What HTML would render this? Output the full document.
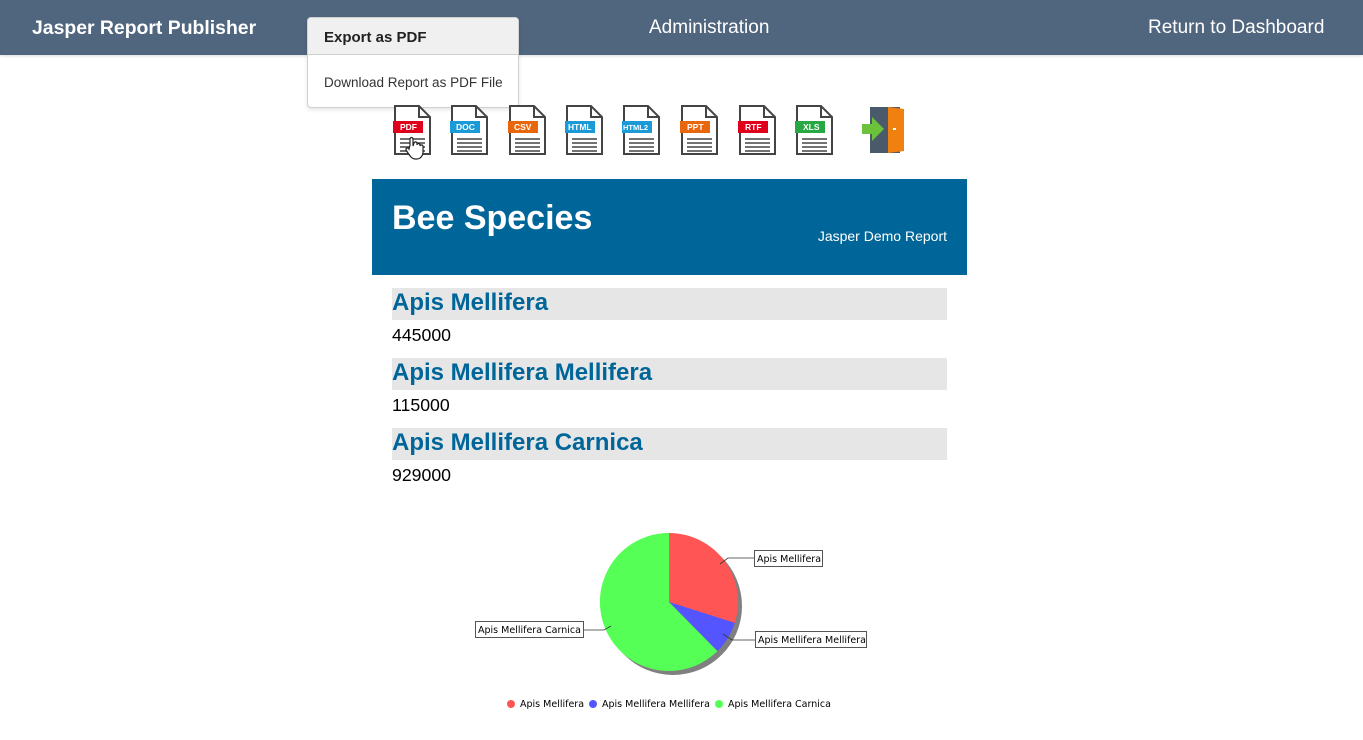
<!DOCTYPE html>
<html><head><meta charset="utf-8"><style>
*{margin:0;padding:0;box-sizing:border-box}
body{width:1363px;height:740px;background:#fff;position:relative;overflow:hidden;font-family:"Liberation Sans",Arial,sans-serif}
.nav{position:absolute;left:0;top:0;width:1363px;height:55px;background:#50657e;color:#fff;font-family:"Liberation Sans",sans-serif;box-shadow:0 1px 3px rgba(0,0,0,.15)}
.nav span{position:absolute;top:17px;font-size:19px;white-space:nowrap}
.brand{left:32px;font-weight:bold;font-size:19.4px!important}
.dd{position:absolute;left:307px;top:17px;width:212px;height:91px;background:#fff;border:1px solid #d0d0d0;border-radius:4px;box-shadow:0 2px 4px rgba(0,0,0,.1);font-family:"Liberation Sans",sans-serif;overflow:hidden;white-space:nowrap}
.dd .h{height:37px;background:#f0f0f0;border-bottom:1px solid #d0d0d0;padding:11px 16px;font-size:15px;color:#222;font-weight:bold}
.dd .i{padding:20px 16px;font-size:13.5px;color:#333}
.hdr{position:absolute;left:372px;top:179px;width:595px;height:96px;background:#006699;color:#fff}
.hdr h1{position:absolute;left:20px;top:20px;font-size:34px;font-weight:bold}
.hdr .s{position:absolute;right:20px;top:49px;font-size:14px}
.g{position:absolute;left:392px;width:555px;height:32px;background:#e6e6e6;color:#006699;font-weight:bold;font-size:24px;padding-top:1px}
.v{position:absolute;left:392px;font-size:17.7px;color:#000}
</style></head><body>
<div class="nav"><span class="brand">Jasper Report Publisher</span><span style="left:649px">Administration</span><span style="left:1148px">Return to Dashboard</span></div>
<div class="dd"><div class="h">Export as PDF</div><div class="i">Download Report as PDF File</div></div>

<svg style="position:absolute;left:0;top:0" width="1363" height="170">
<defs><g id="doc"><path d="M2 2H26L37 13V50H2Z" fill="#fff" stroke="#444" stroke-width="2"/><path d="M26 2V13H37" fill="none" stroke="#444" stroke-width="2"/><g stroke="#444" stroke-width="1.5"><line x1="7" y1="35" x2="32" y2="35"/><line x1="7" y1="39" x2="32" y2="39"/><line x1="7" y1="43" x2="32" y2="43"/><line x1="7" y1="47" x2="32" y2="47"/></g></g></defs>
<g font-family="Liberation Sans,sans-serif" font-weight="bold" font-size="8.5" fill="#fff">
<g transform="translate(393,104)"><use href="#doc"/><rect x="0" y="17" width="30" height="12" fill="#e0001b"/><text x="7" y="26">PDF</text></g>
<g transform="translate(450,104)"><use href="#doc"/><rect x="0" y="17" width="30" height="12" fill="#1a9ad6"/><text x="6" y="26">DOC</text></g>
<g transform="translate(508,104)"><use href="#doc"/><rect x="0" y="17" width="30" height="12" fill="#e8670c"/><text x="6" y="26">CSV</text></g>
<g transform="translate(565,104)"><use href="#doc"/><rect x="0" y="17" width="30" height="12" fill="#1a9ad6"/><text x="3" y="26">HTML</text></g>
<g transform="translate(622,104)"><use href="#doc"/><rect x="0" y="17" width="30" height="12" fill="#1a9ad6"/><text x="1" y="26" font-size="7.5">HTML2</text></g>
<g transform="translate(680,104)"><use href="#doc"/><rect x="0" y="17" width="30" height="12" fill="#e8670c"/><text x="7" y="26">PPT</text></g>
<g transform="translate(738,104)"><use href="#doc"/><rect x="0" y="17" width="30" height="12" fill="#e0001b"/><text x="7" y="26">RTF</text></g>
<g transform="translate(795,104)"><use href="#doc"/><rect x="0" y="17" width="30" height="12" fill="#27a844"/><text x="8" y="26">XLS</text></g>
</g>
<rect x="870" y="107" width="30" height="46" fill="#4a5a6a"/>
<path d="M888 107L904 109V151L888 153Z" fill="#f08010"/>
<rect x="893" y="128" width="3" height="2" fill="#fff"/>
<path d="M862 124H872V117L884 129L872 141V134H862Z" fill="#6cc23a"/>
<path d="M410 145v-6a1.5 1.5 0 0 1 3 0v7l1-3a1.5 1.5 0 0 1 3 1v1a1.5 1.5 0 0 1 3 0v1a1.5 1.5 0 0 1 3 1v5c0 4-3 7-6 7h-2c-3 0-5-3-7-6l-2-3a1.5 1.5 0 0 1 3-1z" fill="#fff" stroke="#222" stroke-width="1.2"/>
</svg>

<div class="hdr"><h1>Bee Species</h1><div class="s">Jasper Demo Report</div></div>
<div class="g" style="top:288px">Apis Mellifera</div><div class="v" style="top:325px">445000</div>
<div class="g" style="top:358px">Apis Mellifera Mellifera</div><div class="v" style="top:395px">115000</div>
<div class="g" style="top:428px">Apis Mellifera Carnica</div><div class="v" style="top:465px">929000</div>

<svg style="position:absolute;left:0;top:0" width="1363" height="740" font-family="DejaVu Sans,sans-serif" font-size="9.5">
<circle cx="673" cy="606" r="69" fill="#808080"/>
<path d="M669 602L669 533A69 69 0 0 1 734.8 622.9Z" fill="#ff5555"/>
<path d="M669 602L734.8 622.9A69 69 0 0 1 717.4 651.1Z" fill="#5555ff"/>
<path d="M669 602L717.4 651.1A69 69 0 1 1 669 533Z" fill="#55ff55"/>
<g stroke="#333" stroke-width="0.8" fill="none"><path d="M720 564L728 558H755"/><path d="M723 634L732 640H756"/><path d="M611 626L604 630H583"/></g>
<g fill="#fff" stroke="#555" stroke-width="1"><rect x="754.5" y="550.5" width="68" height="16"/><rect x="755.5" y="631.5" width="111" height="16"/><rect x="475.5" y="621.5" width="108" height="16"/></g>
<g fill="#000"><text x="757" y="562">Apis Mellifera</text><text x="758" y="643">Apis Mellifera Mellifera</text><text x="478" y="633">Apis Mellifera Carnica</text></g>
<circle cx="511" cy="704" r="4" fill="#ff5555"/><text x="520" y="707">Apis Mellifera</text>
<circle cx="593" cy="704" r="4" fill="#5555ff"/><text x="602" y="707">Apis Mellifera Mellifera</text>
<circle cx="719" cy="704" r="4" fill="#55ff55"/><text x="728" y="707">Apis Mellifera Carnica</text>
</svg>
</body></html>
